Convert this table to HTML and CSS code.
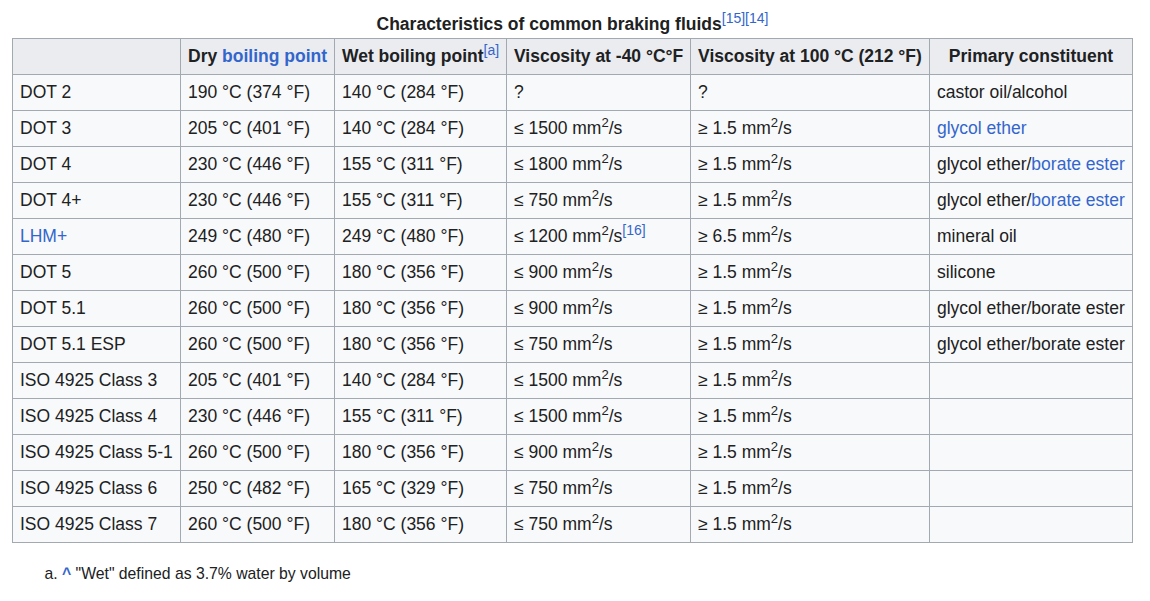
FILE: index.html
```html
<!DOCTYPE html>
<html>
<head>
<meta charset="utf-8">
<link rel="stylesheet" href="styles.css">
</head>
<body>
<div class="content">
<table class="wikitable">
<caption>Characteristics of common braking fluids<sup class="ref"><a>[15]</a></sup><sup class="ref"><a>[14]</a></sup></caption>
<colgroup>
<col class="c1"><col class="c2"><col class="c3"><col class="c4"><col class="c5"><col class="c6">
</colgroup>
<thead>
<tr>
<th></th>
<th>Dry <a>boiling point</a></th>
<th>Wet boiling point<sup class="ref"><a>[a]</a></sup></th>
<th>Viscosity at -40 °C°F</th>
<th>Viscosity at 100 °C (212 °F)</th>
<th>Primary constituent</th>
</tr>
</thead>
<tbody>
<tr><td>DOT 2</td><td>190 °C (374 °F)</td><td>140 °C (284 °F)</td><td>?</td><td>?</td><td>castor oil/alcohol</td></tr>
<tr><td>DOT 3</td><td>205 °C (401 °F)</td><td>140 °C (284 °F)</td><td>≤ 1500 mm<sup>2</sup>/s</td><td>≥ 1.5 mm<sup>2</sup>/s</td><td><a>glycol ether</a></td></tr>
<tr><td>DOT 4</td><td>230 °C (446 °F)</td><td>155 °C (311 °F)</td><td>≤ 1800 mm<sup>2</sup>/s</td><td>≥ 1.5 mm<sup>2</sup>/s</td><td>glycol ether/<a>borate ester</a></td></tr>
<tr><td>DOT 4+</td><td>230 °C (446 °F)</td><td>155 °C (311 °F)</td><td>≤ 750 mm<sup>2</sup>/s</td><td>≥ 1.5 mm<sup>2</sup>/s</td><td>glycol ether/<a>borate ester</a></td></tr>
<tr><td><a>LHM+</a></td><td>249 °C (480 °F)</td><td>249 °C (480 °F)</td><td>≤ 1200 mm<sup>2</sup>/s<sup class="ref"><a>[16]</a></sup></td><td>≥ 6.5 mm<sup>2</sup>/s</td><td>mineral oil</td></tr>
<tr><td>DOT 5</td><td>260 °C (500 °F)</td><td>180 °C (356 °F)</td><td>≤ 900 mm<sup>2</sup>/s</td><td>≥ 1.5 mm<sup>2</sup>/s</td><td>silicone</td></tr>
<tr><td>DOT 5.1</td><td>260 °C (500 °F)</td><td>180 °C (356 °F)</td><td>≤ 900 mm<sup>2</sup>/s</td><td>≥ 1.5 mm<sup>2</sup>/s</td><td>glycol ether/borate ester</td></tr>
<tr><td>DOT 5.1 ESP</td><td>260 °C (500 °F)</td><td>180 °C (356 °F)</td><td>≤ 750 mm<sup>2</sup>/s</td><td>≥ 1.5 mm<sup>2</sup>/s</td><td>glycol ether/borate ester</td></tr>
<tr><td>ISO 4925 Class 3</td><td>205 °C (401 °F)</td><td>140 °C (284 °F)</td><td>≤ 1500 mm<sup>2</sup>/s</td><td>≥ 1.5 mm<sup>2</sup>/s</td><td></td></tr>
<tr><td>ISO 4925 Class 4</td><td>230 °C (446 °F)</td><td>155 °C (311 °F)</td><td>≤ 1500 mm<sup>2</sup>/s</td><td>≥ 1.5 mm<sup>2</sup>/s</td><td></td></tr>
<tr><td>ISO 4925 Class 5-1</td><td>260 °C (500 °F)</td><td>180 °C (356 °F)</td><td>≤ 900 mm<sup>2</sup>/s</td><td>≥ 1.5 mm<sup>2</sup>/s</td><td></td></tr>
<tr><td>ISO 4925 Class 6</td><td>250 °C (482 °F)</td><td>165 °C (329 °F)</td><td>≤ 750 mm<sup>2</sup>/s</td><td>≥ 1.5 mm<sup>2</sup>/s</td><td></td></tr>
<tr><td>ISO 4925 Class 7</td><td>260 °C (500 °F)</td><td>180 °C (356 °F)</td><td>≤ 750 mm<sup>2</sup>/s</td><td>≥ 1.5 mm<sup>2</sup>/s</td><td></td></tr>
</tbody>
</table>
<ol class="notes">
<li><b class="caret"><a>^</a></b> "Wet" defined as 3.7% water by volume</li>
</ol>
</div>
</body>
</html>
```
FILE: styles.css
```css
html, body {
  margin: 0;
  padding: 0;
  background: #ffffff;
}
body {
  font-family: "Liberation Sans", Arial, sans-serif;
  font-size: 17.5px;
  color: #202122;
}
.content {
  padding: 10px 0 0 12px;
}
a {
  color: #3366cc;
  text-decoration: none;
}
.wikitable {
  border-collapse: collapse;
  table-layout: fixed;
  width: 1121px;
  background: #f8f9fa;
  border: 1px solid #a2a9b1;
}
.wikitable caption {
  font-weight: bold;
  line-height: 28px;
  text-align: center;
}
.c1 { width: 168px; }
.c2 { width: 154px; }
.c3 { width: 172px; }
.c4 { width: 184px; }
.c5 { width: 239px; }
.c6 { width: 203px; }
.wikitable th,
.wikitable td {
  border: 1px solid #a2a9b1;
  height: 36px;
  box-sizing: border-box;
  padding: 0 7px 2px;
  line-height: 26px;
  white-space: nowrap;
  overflow: visible;
}
.wikitable th {
  background: #eaecf0;
  font-weight: bold;
  text-align: center;
}
.wikitable td {
  text-align: left;
}
sup {
  font-size: 75%;
  line-height: 1;
  vertical-align: super;
}
sup.ref {
  font-size: 80%;
  font-weight: normal;
}
.notes {
  list-style-type: lower-alpha;
  margin: 19px 0 0 0;
  padding-left: 50px;
  font-size: 15.75px;
  line-height: 24px;
}
.caret {
  font-weight: bold;
}
```
